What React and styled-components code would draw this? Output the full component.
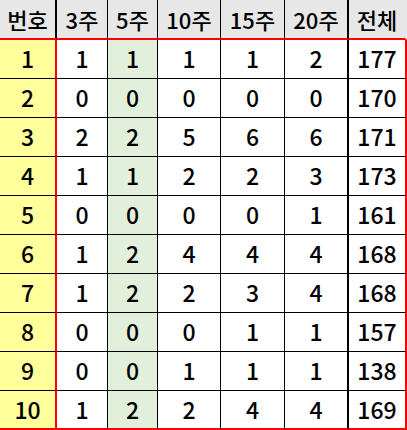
import React from "react";
import styled, { createGlobalStyle } from "styled-components";

const Global = createGlobalStyle`
  html, body { margin: 0; padding: 0; background: #ffffff; }
  * { box-sizing: border-box; }
`;

const COLS = [57, 51, 50, 63, 64, 64, 58];
const HEAD = ["번호", "3주", "5주", "10주", "15주", "20주", "전체"];
const DATA = [
  [1, 1, 1, 1, 1, 2, 177],
  [2, 0, 0, 0, 0, 0, 170],
  [3, 2, 2, 5, 6, 6, 171],
  [4, 1, 1, 2, 2, 3, 173],
  [5, 0, 0, 0, 0, 1, 161],
  [6, 1, 2, 4, 4, 4, 168],
  [7, 1, 2, 2, 3, 4, 168],
  [8, 0, 0, 0, 1, 1, 157],
  [9, 0, 0, 1, 1, 1, 138],
  [10, 1, 2, 2, 4, 4, 169],
];

const Sheet = styled.div`
  width: 407px;
  height: 430px;
  display: grid;
  grid-template-columns: ${COLS.map((c) => c + "px").join(" ")};
  grid-template-rows: 40px repeat(9, 39px) 39px;
  font-family: "Noto Sans CJK KR", "Noto Sans", sans-serif;
  font-weight: 500;
  color: #000;
  overflow: hidden;
`;

const rightBorder = (col, header) => {
  if (col === 0) return header ? "2px solid #000" : "2px solid #ff0000";
  if (col === 5) return "2px solid #000";
  if (col === 6) return header ? "2px solid #e7e7e7" : "2px solid #ff0000";
  return "1px solid #000";
};

const HeadCell = styled.div`
  display: flex;
  align-items: center;
  justify-content: center;
  background: #e7e7e7;
  border-right: ${(p) => rightBorder(p.$col, true)};
  border-bottom: 2px solid #ff0000;
  font-size: 22px;
  line-height: 1;
  padding-bottom: 1px;
`;

const bg = (col) => (col === 0 ? "#ffff9c" : col === 2 ? "#e2efda" : "#ffffff");

const Cell = styled.div`
  display: flex;
  align-items: center;
  justify-content: center;
  background: ${(p) => bg(p.$col)};
  border-right: ${(p) => rightBorder(p.$col, false)};
  border-bottom: ${(p) => (p.$last ? "2px solid #ff0000" : "1px solid #000")};
  font-size: 23px;
  line-height: 1;
  padding-bottom: 1px;
`;

export default function App() {
  return (
    <>
      <Global />
      <Sheet>
        {HEAD.map((h, i) => (
          <HeadCell key={h} $col={i}>
            {h}
          </HeadCell>
        ))}
        {DATA.map((row, r) =>
          row.map((v, c) => (
            <Cell key={r + "-" + c} $col={c} $last={r === DATA.length - 1}>
              {v}
            </Cell>
          ))
        )}
      </Sheet>
    </>
  );
}
